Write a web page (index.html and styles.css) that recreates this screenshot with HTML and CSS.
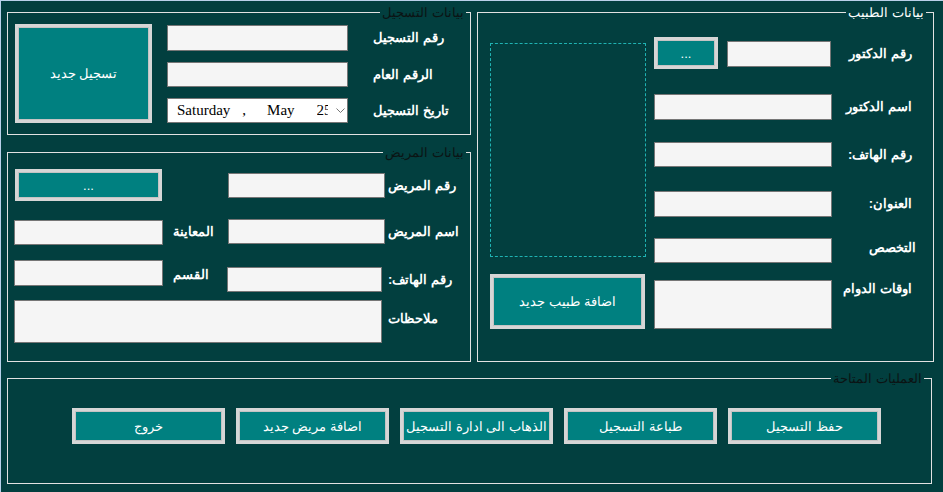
FILE: index.html
```html
<!DOCTYPE html>
<html dir="rtl" lang="ar">
<head>
  <meta charset="utf-8">
  <title>تسجيل المرضى</title>
  <link rel="stylesheet" href="styles.css">
</head>
<body>
  <div class="form">
    <div class="top">
      <div class="left-col">
        <fieldset class="group reg">
          <legend>بيانات التسجيل</legend>
          <div class="reg-grid">
            <label class="lbl reg-lbl">رقم التسجيل</label>
            <input class="field reg-field" type="text">
            <button class="btn reg-new">تسجيل جديد</button>

            <label class="lbl reg-lbl">الرقم العام</label>
            <input class="field reg-field" type="text">

            <label class="lbl reg-lbl">تاريخ التسجيل</label>
            <div class="date-picker">
              <span class="d-day">Saturday</span>
              <span class="d-sep">,</span>
              <span class="d-month">May</span>
              <span class="d-num">25</span>
              <svg class="d-arrow" width="9" height="6" viewBox="0 0 9 6">
                <path d="M0.5 0.5 L4.5 4.5 L8.5 0.5" fill="none" stroke="#777" stroke-width="1"/>
              </svg>
            </div>
          </div>
        </fieldset>

        <fieldset class="group patient">
          <legend>بيانات المريض</legend>
          <div class="pat-grid">
            <label class="lbl pat-lbl p-r1">رقم المريض</label>
            <input class="field pat-id" type="text">
            <button class="btn pat-dots">...</button>

            <label class="lbl pat-lbl p-r2">اسم المريض</label>
            <input class="field pat-name" type="text">
            <label class="lbl side-lbl s-r2">المعاينة</label>
            <input class="field side-field s-exam" type="text">

            <label class="lbl pat-lbl p-r3">رقم الهاتف:</label>
            <input class="field pat-phone" type="text">
            <label class="lbl side-lbl s-r3">القسم</label>
            <input class="field side-field s-dept" type="text">

            <label class="lbl pat-lbl p-r4">ملاحظات</label>
            <textarea class="field pat-notes"></textarea>
          </div>
        </fieldset>
      </div>

      <fieldset class="group doctor">
        <legend>بيانات الطبيب</legend>
        <div class="doc-grid">
          <label class="lbl doc-lbl d-r1">رقم الدكتور</label>
          <div class="doc-id-cell">
            <input class="field doc-id" type="text">
            <button class="btn doc-dots">...</button>
          </div>
          <div class="photo"></div>

          <label class="lbl doc-lbl">اسم الدكتور</label>
          <input class="field doc-field" type="text">

          <label class="lbl doc-lbl">رقم الهاتف:</label>
          <input class="field doc-field h25" type="text">

          <label class="lbl doc-lbl">العنوان:</label>
          <input class="field doc-field" type="text">

          <label class="lbl doc-lbl d-r5">التخصص</label>
          <input class="field doc-field h25" type="text">

          <label class="lbl doc-lbl d-r6">اوقات الدوام</label>
          <textarea class="field doc-hours"></textarea>
          <button class="btn doc-add">اضافة طبيب جديد</button>
        </div>
      </fieldset>
    </div>

    <fieldset class="group ops">
      <legend>العمليات المتاحة</legend>
      <div class="ops-row">
        <button class="btn op-btn">حفظ التسجيل</button>
        <button class="btn op-btn">طباعة التسجيل</button>
        <button class="btn op-btn">الذهاب الى ادارة التسجيل</button>
        <button class="btn op-btn">اضافة مريض جديد</button>
        <button class="btn op-btn">خروج</button>
      </div>
    </fieldset>
  </div>
</body>
</html>
```

FILE: styles.css
```css
* {
  box-sizing: border-box;
}

html,
body {
  margin: 0;
  padding: 0;
}

body {
  width: 943px;
  height: 492px;
  overflow: hidden;
  background-color: #023f3f;
  border-top: 1px solid #b9d1ea;
  border-left: 1px solid #b9d1ea;
  font-family: "Liberation Sans", Arial, sans-serif;
  font-size: 13px;
  color: #fff;
}

.form {
  padding: 4px 9px 0 6px;
}

/* the groups sit left to right like the original form */
.top {
  display: flex;
  flex-direction: row-reverse;
  justify-content: flex-end;
  gap: 6px;
}

.left-col {
  display: flex;
  flex-direction: column;
  gap: 10px;
  width: 464px;
}

/* group boxes */
.group {
  margin: 0;
  padding: 0;
  min-width: 0;
  border: 1px solid #e2e2e2;
}

.group legend {
  margin-right: 4px;
  padding: 0 2px;
  font-size: 13px;
  line-height: 15px;
  color: #0b1414;
}

.doctor legend,
.ops legend {
  margin-right: 7px;
}

.doctor legend {
  color: #fff;
}

.reg {
  height: 130px;
}

.patient {
  height: 217px;
}

.doctor {
  width: 457px;
  height: 357px;
}

.ops {
  height: 113px;
  margin: 9px 2px 0 0;
}

/* controls */
.field {
  display: block;
  margin: 0;
  padding: 0 4px;
  height: 26px;
  background-color: #f5f5f5;
  border: 1px solid #767676;
  border-radius: 0;
  font-family: inherit;
  font-size: 13px;
  resize: none;
  outline: none;
}

.h25 {
  height: 25px;
}

.btn {
  margin: 0;
  padding: 0;
  background-color: #008080;
  border: 3px solid #d6d6d6;
  box-shadow: 0 0 0 1px #c4c4c4 inset;
  color: #fff;
  font-family: inherit;
  font-size: 13px;
  cursor: pointer;
}

.lbl {
  font-weight: bold;
  font-size: 13px;
  line-height: 26px;
  white-space: nowrap;
}

/* registration */
.reg-grid {
  display: grid;
  grid-template-columns: 122px 181px 15px 137px;
  grid-template-rows: 26px 25px 25px;
  row-gap: 11px;
  padding: 5px 0 0 7px;
}

.reg-lbl {
  grid-column: 1;
  text-align: left;
  padding-left: 25px;
  line-height: 25px;
}

.reg-field,
.date-picker {
  grid-column: 2;
  height: 100%;
}

.reg-new {
  grid-column: 4;
  grid-row: 1 / 4;
  margin-top: -1px;
  height: 99px;
}

.date-picker {
  display: flex;
  align-items: center;
  direction: ltr;
  padding-left: 9px;
  background-color: #fff;
  border: 1px solid #767676;
  font-family: "Liberation Serif", "Times New Roman", serif;
  font-size: 15px;
  color: #000;
}

.d-sep {
  margin-left: 12px;
}

.d-month {
  margin-left: 21px;
}

.d-num {
  flex: 0 0 11px;
  margin-left: 22px;
  overflow: hidden;
  white-space: nowrap;
}

.d-arrow {
  margin-left: 8px;
}

/* patient */
.pat-grid {
  display: grid;
  grid-template-columns: 85px 157px 65px 149px;
  grid-template-rows: 50px 41px 40px 43px;
  padding: 9px 0 0 6px;
}

.pat-lbl {
  grid-column: 1;
  text-align: left;
  padding-left: 3px;
  line-height: 25px;
  align-self: start;
}

.p-r1 { grid-row: 1; margin-top: 4px; }
.p-r2 { grid-row: 2; }
.p-r3 { grid-row: 3; margin-top: 7px; }
.p-r4 { grid-row: 4; margin-top: 6px; }

.pat-id,
.pat-name,
.pat-phone {
  grid-column: 2;
  height: 25px;
  align-self: start;
}

.pat-id {
  grid-row: 1;
  margin-top: 4px;
}

.pat-name {
  grid-row: 2;
}

.pat-phone {
  grid-row: 3;
  margin-top: 7px;
  margin-right: 3px;
  width: 155px;
}

.pat-dots {
  grid-column: 4;
  grid-row: 1;
  align-self: start;
  height: 32px;
  width: 147px;
  margin-right: 1px;
}

.side-lbl {
  grid-column: 3;
  text-align: left;
  padding-left: 10px;
  line-height: 25px;
  align-self: start;
}

.s-r2 { grid-row: 2; }
.s-r3 { grid-row: 3; margin-top: 2px; }

.side-field {
  grid-column: 4;
  align-self: start;
}

.s-exam {
  grid-row: 2;
  margin-top: 1px;
  height: 25px;
}

.s-dept {
  grid-row: 3;
}

.pat-notes {
  grid-column: 2 / 5;
  grid-row: 4;
  margin-right: 3px;
  height: 43px;
}

/* doctor */
.doc-grid {
  display: grid;
  grid-template-columns: 101px 178px 176px;
  grid-template-rows: 57px 48px 49px 47px 42px 49px;
  padding-top: 17px;
}

.doc-lbl {
  grid-column: 1;
  text-align: right;
  padding-right: 21px;
  align-self: start;
}

.d-r1 {
  margin-top: 4px;
}

.d-r5 {
  margin-top: -3px;
  padding-right: 17px;
}

.d-r6 {
  line-height: 18px;
}

.doc-id-cell {
  grid-column: 2;
  display: flex;
  gap: 9px;
  align-items: flex-start;
}

.doc-id {
  width: 104px;
  margin-top: 4px;
  margin-right: 1px;
}

.doc-dots {
  width: 64px;
  height: 32px;
}

.doc-field {
  grid-column: 2;
  align-self: start;
}

.doc-hours {
  grid-column: 2;
  height: 49px;
}

.photo {
  grid-column: 3;
  grid-row: 1 / 6;
  align-self: start;
  margin: 6px 8px 0 12px;
  height: 214px;
  border: 1px dashed #1fb3b3;
}

.doc-add {
  grid-column: 3;
  grid-row: 6;
  margin: -6px 9px 0 12px;
  height: 55px;
}

/* operations */
.ops-row {
  display: flex;
  gap: 11px;
  padding: 22px 50px 0 0;
}

.op-btn {
  width: 153px;
  height: 36px;
}
```
